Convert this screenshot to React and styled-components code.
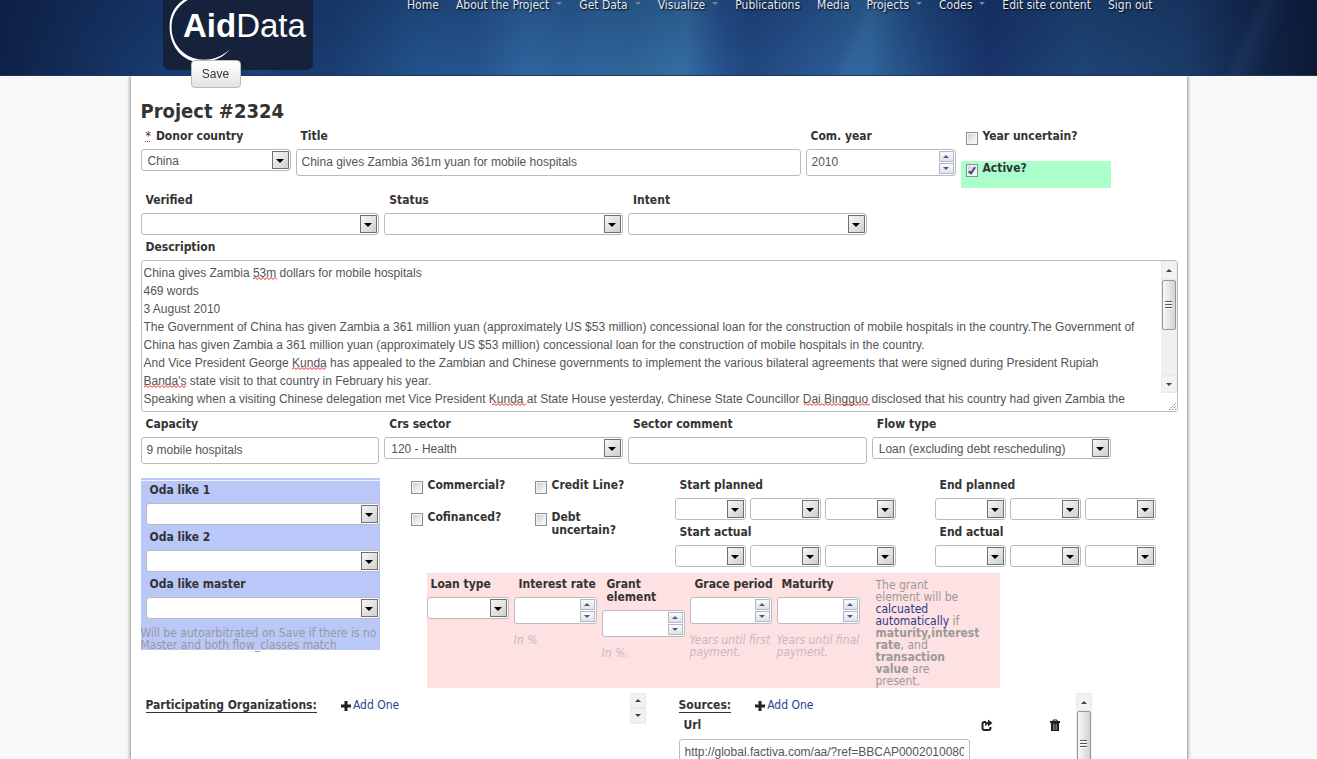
import React from "react";
import styled, { createGlobalStyle, css } from "styled-components";

const UI = `"DejaVu Sans Condensed", "DejaVu Sans", sans-serif`;
const FIELD = `"Liberation Sans", Arial, sans-serif`;

const GlobalStyle = createGlobalStyle`
  *, *::before, *::after { box-sizing: border-box; }
  body {
    margin: 0;
    background: #f8f8f8;
    color: #333;
    font-family: ${UI};
    font-size: 12px;
  }
`;

const Page = styled.div`
  display: flex;
  flex-direction: column;
  height: 100vh;
  overflow: hidden;
`;

const Header = styled.header`
  position: relative;
  z-index: 1;
  flex: none;
  height: 76px;
  border-bottom: 1px solid #20365f;
  background:
    linear-gradient(to bottom, rgba(10, 25, 60, 0.24), rgba(10, 25, 60, 0) 90%),
    linear-gradient(98deg, transparent 43%, rgba(80, 150, 200, 0.08) 45%, transparent 48%, rgba(80, 150, 200, 0.08) 52%, transparent 54%),
    linear-gradient(68deg, transparent 18%, rgba(70, 120, 180, 0.14) 19%, transparent 21%),
    linear-gradient(112deg, transparent 64%, rgba(90, 150, 200, 0.14) 65%, transparent 68%, transparent 93%, rgba(90, 140, 190, 0.1) 94%, transparent 96%),
    linear-gradient(to right, #0f2145 0%, #14305e 7%, #183a6e 12%, #1a3c70 25%, #22528a 32%, #26528c 36%, #2e649c 40%, #2b5f96 44%, #2d6498 48%, #32699e 52%, #264f8a 55%, #20477f 57%, #27528c 61%, #2d6399 66%, #1f4479 71%, #18336a 75%, #1e4473 82%, #1b3b68 90%, #122549 95%, #0c1a36 100%);
`;

const HeaderInner = styled.div`
  display: flex;
  align-items: flex-start;
  max-width: 1055px;
  height: 75px;
  margin: 0 auto;
  padding: 0 32px;
  overflow: hidden;
`;

const Logo = styled.a`
  display: block;
  flex: none;
  width: 150px;
  height: 70px;
  border-radius: 0 0 6px 6px;
  background: #16213c;
  svg { display: block; }
`;

const Nav = styled.nav`
  display: flex;
  gap: 17px;
  margin: -4px 0 0 94px;
`;

const NavLink = styled.a`
  display: flex;
  align-items: center;
  gap: 7px;
  color: #e3e9f1;
  line-height: 18px;
  text-decoration: none;
  text-shadow: 1px 1px 2px #000;
  white-space: nowrap;
  ${(p) => p.$menu && css`
    &::after {
      content: "";
      margin-top: -4px;
      border: 3px solid transparent;
      border-top-color: #7488a6;
      border-bottom: 0;
    }
  `}
`;

const SaveButton = styled.button`
  position: fixed;
  top: 60px;
  left: max(60px, calc(50% - 468px));
  z-index: 2;
  width: 50px;
  height: 28px;
  padding: 0;
  border: 1px solid #bbb;
  border-radius: 4px;
  background: linear-gradient(#fff, #e4e4e4);
  color: #333;
  font: 12px/26px ${FIELD};
`;

const Sheet = styled.main`
  flex: 1;
  width: 100%;
  max-width: 1056px;
  margin: 0 auto;
  padding: 22px 9px 0 10px;
  background: #fff;
  box-shadow: 0 0 4px #555;
`;

const Title = styled.h1`
  margin: 0;
  padding: 1px 0 6px;
  font-size: 20px;
  line-height: 24px;
`;

const Row = styled.div`
  display: grid;
  grid-template-columns: ${(p) => p.$cols};
  gap: 5px;
  align-items: start;
  max-width: 970px;
  margin-bottom: ${(p) => p.$after || 5}px;
`;

const FieldBox = styled.div`
  display: flex;
  flex-direction: column;
  min-width: 0;
`;

const Label = styled.label`
  margin: 0 0 6px;
  padding: 1px 0 0 ${(p) => p.$inset || 5}px;
  font-weight: bold;
  line-height: 13px;
  white-space: ${(p) => (p.$oneLine ? "nowrap" : "normal")};
`;

const Required = styled.abbr`
  margin-right: 5px;
  font-weight: normal;
  text-decoration: underline dotted #a33;
`;

const control = css`
  width: 100%;
  border: 1px solid #bbb;
  border-radius: 3px;
  background: #fff;
  color: #555;
  font: 12px ${FIELD};
  outline: 0;
`;

const SelectBox = styled.span`
  position: relative;
  display: block;
  flex: 1;
  select {
    ${control}
    display: block;
    appearance: none;
    height: 22px;
    padding: 1px 24px 0 6px;
  }
  &::before {
    content: "";
    position: absolute;
    top: 2px;
    right: 2px;
    width: 17px;
    height: 18px;
    border: 1px solid #707070;
    background: linear-gradient(135deg, #f6f6f6, #cfcfcf);
    pointer-events: none;
  }
  &::after {
    content: "";
    position: absolute;
    top: 10px;
    right: 7px;
    border: 4px solid transparent;
    border-top-color: #000;
    border-bottom: 0;
    pointer-events: none;
  }
`;

const TextInput = styled.input`
  ${control}
  height: 27px;
  padding: 0 5px 2px;
`;

const NumberBox = styled.span`
  position: relative;
  display: block;
  input { appearance: textfield; display: block; }
  input::-webkit-inner-spin-button { display: none; }
`;

const Spinner = styled.span`
  position: absolute;
  top: 2px;
  right: 2px;
  display: flex;
  flex-direction: column;
  gap: 1px;
`;

const SpinButton = styled.button`
  display: flex;
  align-items: center;
  justify-content: center;
  width: 15px;
  height: 11px;
  padding: 0;
  border: 1px solid #b4b9c6;
  background: linear-gradient(#fafafd, #dfe2ea);
  &::after {
    content: "";
    border: 3px solid transparent;
    ${(p) => (p.$up ? "border-bottom-color: #4c5a80; border-top: 0;" : "border-top-color: #4c5a80; border-bottom: 0;")}
  }
`;

const CheckRow = styled.div`
  display: flex;
  align-items: flex-start;
  gap: 5px;
  height: ${(p) => p.$height || 32}px;
  padding-left: 5px;
  background: ${(p) => (p.$on ? "#aaffcb" : "none")};
  label { padding-top: 1px; font-weight: bold; line-height: 13px; }
  input {
    appearance: none;
    display: grid;
    place-items: center;
    flex: none;
    width: 12px;
    height: 13px;
    margin: 3px 0 0;
    border: 1px solid #8b8d90;
    background: linear-gradient(135deg, #c9cdd0, #fff);
    box-shadow: inset 0 0 0 1px #f4f4f4;
  }
  input:checked::before {
    content: "";
    width: 4px;
    height: 8px;
    border: solid #3a4c86;
    border-width: 0 2px 2px 0;
    rotate: 35deg;
    translate: 0 -1px;
  }
`;

const Editor = styled.div`
  position: relative;
  display: flex;
  height: 152px;
  margin-bottom: 5px;
  border: 1px solid #bbb;
  border-radius: 3px;
  overflow: hidden;
  textarea {
    ${control}
    flex: 1;
    border: 0;
    padding: 3px 24px 0 2px;
    height: 150px;
    line-height: 18px;
    resize: none;
    overflow: hidden;
    white-space: pre-wrap;
  }
`;

const SpellMark = styled.svg`
  position: absolute;
  left: ${(p) => p.$x}px;
  top: ${(p) => 16 + p.$line * 18}px;
  pointer-events: none;
`;

const Bar = styled.div`
  display: flex;
  flex-direction: column;
  flex: none;
  width: 16px;
  background: #f0f0f0;
`;

const ArrowButton = styled.button`
  display: flex;
  align-items: center;
  justify-content: center;
  flex: none;
  width: 100%;
  height: ${(p) => p.$height || 15}px;
  margin-top: ${(p) => (p.$last ? "auto" : 0)};
  padding: 0;
  border: 1px solid #e9e9e9;
  background: #f2f2f2;
  &::after {
    content: "";
    border: 3px solid transparent;
    ${(p) => (p.$up ? "border-bottom-color: #444; border-top: 0;" : "border-top-color: #444; border-bottom: 0;")}
  }
`;

const Thumb = styled.div`
  display: flex;
  align-items: center;
  justify-content: center;
  flex: none;
  width: 14px;
  height: ${(p) => p.$height}px;
  margin: 0 1px;
  border: 1px solid #979797;
  border-radius: 2px;
  background: linear-gradient(to right, #f8f8f8, #d2d3d6);
  &::after {
    content: "";
    width: 7px;
    height: 8px;
    background: repeating-linear-gradient(#555 0 1px, #fff 1px 2px, transparent 2px 3px);
  }
`;

const Corner = styled.div`
  display: flex;
  align-items: flex-end;
  justify-content: flex-end;
  height: 18px;
  background: #fff;
`;

const Lower = styled.div`
  display: flex;
  align-items: flex-start;
  gap: 26px;
`;

const OdaPanel = styled.section`
  display: flex;
  flex-direction: column;
  gap: 5px;
  flex: none;
  width: 239px;
  height: 172px;
  border-top: 2px solid #b9c8f9;
  background: #b9c8f9;
  box-shadow: inset 0 1px 0 #eef2ff;
  padding: 3px 0 0 5px;
`;

const Hint = styled.p`
  margin: ${(p) => p.$top || 0}px 0 0;
  color: ${(p) => p.$color || "#999"};
  font-style: ${(p) => (p.$italic ? "italic" : "normal")};
  line-height: 12px;
`;

const OdaHint = styled(Hint)`
  margin: 3px 0 0 -5px;
  white-space: nowrap;
`;

const Details = styled.div`
  flex: 1;
  min-width: 0;
`;

const DetailTop = styled.div`
  display: flex;
  height: 95px;
`;

const Checks = styled.div`
  display: grid;
  grid-template-columns: 124px 110px;
  align-content: start;
  flex: none;
  width: 269px;
`;

const Dates = styled.div`
  display: grid;
  align-content: start;
  gap: 5px;
  flex: none;
  width: 221px;
  & + & { margin-left: 39px; }
`;

const Triple = styled.div`
  display: flex;
  gap: 4px;
`;

const LoanPanel = styled.section`
  display: grid;
  grid-template-columns: 82px 83px 83px 82px 83px 88px;
  gap: 5px;
  width: 573px;
  height: 115px;
  margin-left: 21px;
  padding-top: 3px;
  background: #fee1e2;
  border-top: 1px solid #f4dede;
`;

const GrantNote = styled(Hint)`
  width: 88px;
  margin-left: 11px;
  a { color: #2b3990; text-decoration: none; }
`;

const Lists = styled.div`
  display: flex;
  gap: 29px;
  margin-top: 5px;
`;

const ListPanel = styled.section`
  display: flex;
  width: ${(p) => p.$width}px;
  height: ${(p) => p.$height}px;
`;

const ListBody = styled.div`
  flex: 1;
  min-width: 0;
  padding: 5px 0 0 ${(p) => p.$inset}px;
`;

const ListHead = styled.div`
  display: flex;
  align-items: center;
  gap: 24px;
  line-height: 15px;
  h2 {
    margin: 0;
    border-bottom: 1px solid #333;
    font-size: 12px;
    line-height: 14px;
  }
`;

const AddLink = styled.a`
  display: flex;
  align-items: center;
  gap: 2px;
  color: #2b3f8f;
  text-decoration: none;
`;

const SourceHead = styled.div`
  display: grid;
  grid-template-columns: 302px 68px 1fr;
  height: 26px;
  padding-top: 6px;
  label { padding-left: 5px; font-weight: bold; line-height: 13px; }
`;

const IconButton = styled.button`
  width: 12px;
  height: 13px;
  padding: 0;
  border: 0;
  background: none;
  color: #222;
  svg { display: block; }
`;

const SourceInput = styled(TextInput)`
  width: 291px;
`;

const slug = (s) => s.toLowerCase().replace(/[^a-z0-9]+/g, "-");

function Select({ id, label, value = "" }) {
  return (
    <SelectBox>
      <select id={id} aria-label={label} defaultValue={value}>
        <option value={value}>{value}</option>
      </select>
    </SelectBox>
  );
}

function SelectField({ label, value, required, inset }) {
  const id = slug(label);
  return (
    <FieldBox>
      <Label htmlFor={id} $inset={inset}>
        {required && <Required title="required">*</Required>}
        {label}
      </Label>
      <Select id={id} value={value} />
    </FieldBox>
  );
}

function TextField({ label, value, inset }) {
  const id = slug(label);
  return (
    <FieldBox>
      <Label htmlFor={id} $inset={inset}>{label}</Label>
      <TextInput id={id} type="text" defaultValue={value} />
    </FieldBox>
  );
}

function NumberField({ label, value, hint, oneLine }) {
  const id = slug(label);
  return (
    <FieldBox>
      <Label htmlFor={id} $oneLine={oneLine}>{label}</Label>
      <NumberBox>
        <TextInput id={id} type="number" defaultValue={value} />
        <Spinner>
          <SpinButton type="button" $up aria-label={`Increase ${label}`} />
          <SpinButton type="button" aria-label={`Decrease ${label}`} />
        </Spinner>
      </NumberBox>
      {hint && <Hint $italic $top={10} $color="#c4bcbf">{hint}</Hint>}
    </FieldBox>
  );
}

function Check({ label, on, height }) {
  const id = slug(label);
  return (
    <CheckRow $on={on} $height={height}>
      <input id={id} type="checkbox" defaultChecked={on} />
      <label htmlFor={id}>{label}</label>
    </CheckRow>
  );
}

function DateField({ label }) {
  const id = slug(label);
  return (
    <FieldBox>
      <Label htmlFor={id}>{label}</Label>
      <Triple>
        <Select id={id} />
        <Select label={`${label} month`} />
        <Select label={`${label} day`} />
      </Triple>
    </FieldBox>
  );
}

function Squiggle({ x, line, width }) {
  let d = "M0 2";
  for (let i = 2; i <= width; i += 2) d += `L${i} ${i % 4 ? 0.5 : 2.5}`;
  return (
    <SpellMark $x={x} $line={line} width={width} height="3" aria-hidden="true">
      <path d={d} fill="none" stroke="#e22" />
    </SpellMark>
  );
}

function AddOne() {
  return (
    <AddLink href="#">
      <svg width="10" height="10" viewBox="0 0 10 10" aria-hidden="true">
        <path d="M5 0V10M0 5H10" stroke="#222" strokeWidth="3" />
      </svg>
      Add One
    </AddLink>
  );
}

const DESCRIPTION = `China gives Zambia 53m dollars for mobile hospitals
469 words
3 August 2010
The Government of China has given Zambia a 361 million yuan (approximately US $53 million) concessional loan for the construction of mobile hospitals in the country.The Government of China has given Zambia a 361 million yuan (approximately US $53 million) concessional loan for the construction of mobile hospitals in the country.
And Vice President George Kunda has appealed to the Zambian and Chinese governments to implement the various bilateral agreements that were signed during President Rupiah Banda's state visit to that country in February his year.
Speaking when a visiting Chinese delegation met Vice President Kunda at State House yesterday, Chinese State Councillor Dai Bingguo disclosed that his country had given Zambia the`;

const MARKS = [
  { x: 111, line: 0, width: 25 },
  { x: 150, line: 5, width: 35 },
  { x: 2, line: 6, width: 43 },
  { x: 350, line: 7, width: 35 },
  { x: 662, line: 7, width: 66 },
];

const NAV = [
  ["Home"], ["About the Project", true], ["Get Data", true], ["Visualize", true], ["Publications"],
  ["Media"], ["Projects", true], ["Codes", true], ["Edit site content"], ["Sign out"],
];

export default function App() {
  return (
    <Page>
      <GlobalStyle />
      <Header>
        <HeaderInner>
          <Logo href="#" aria-label="AidData">
            <svg width="150" height="70" viewBox="0 0 150 70">
              <path d="M26 -3C10 4 5 18 7 33C10 53 25 64 42 62C53 61 62 56 67 49C61 55 53 59 44 59.500C27 61 12 50 9 33C7 18 12 6 30 -3Z" fill="#fff" />
              <text x="20" y="37" fill="#fff" fontSize="33" fontFamily="'Liberation Sans', Arial, sans-serif">
                <tspan fontWeight="bold">Aid</tspan><tspan>Data</tspan>
              </text>
            </svg>
          </Logo>
          <Nav>
            {NAV.map(([text, menu]) => (
              <NavLink key={text} href="#" $menu={menu}>{text}</NavLink>
            ))}
          </Nav>
        </HeaderInner>
      </Header>
      <SaveButton type="button">Save</SaveButton>

      <Sheet>
        <Title>Project #2324</Title>
        <Row $cols="150fr 505fr 150fr 150fr">
          <SelectField label="Donor country" value="China" required />
          <TextField label="Title" value="China gives Zambia 361m yuan for mobile hospitals" />
          <NumberField label="Com. year" value="2010" />
          <div>
            <Check label="Year uncertain?" />
            <Check label="Active?" on height={27} />
          </div>
        </Row>
        <Row $cols="repeat(4, 1fr)">
          <SelectField label="Verified" />
          <SelectField label="Status" />
          <SelectField label="Intent" />
        </Row>
        <FieldBox>
          <Label htmlFor="description">Description</Label>
          <Editor>
            <textarea id="description" spellCheck={false} defaultValue={DESCRIPTION} />
            {MARKS.map((m) => <Squiggle key={`${m.line}-${m.x}`} {...m} />)}
            <Bar>
              <ArrowButton type="button" $up $height={19} aria-label="Scroll description up" />
              <Thumb $height={50} />
              <ArrowButton type="button" $last $height={18} aria-label="Scroll description down" />
              <Corner>
                <svg width="9" height="9" aria-hidden="true">
                  <path d="M1 8L8 1M4 8L8 4M7 8L8 7" stroke="#777" strokeDasharray="2 1" />
                </svg>
              </Corner>
            </Bar>
          </Editor>
        </FieldBox>
        <Row $cols="repeat(4, 1fr)" $after={14}>
          <TextField label="Capacity" value="9 mobile hospitals" />
          <SelectField label="Crs sector" value="120 - Health" />
          <TextField label="Sector comment" />
          <SelectField label="Flow type" value="Loan (excluding debt rescheduling)" />
        </Row>

        <Lower>
          <OdaPanel>
            <SelectField label="Oda like 1" inset={4} />
            <SelectField label="Oda like 2" inset={4} />
            <SelectField label="Oda like master" inset={4} />
            <OdaHint>Will be autoarbitrated on Save if there is no<br />Master and both flow_classes match</OdaHint>
          </OdaPanel>
          <Details>
            <DetailTop>
              <Checks>
                <Check label="Commercial?" />
                <Check label="Credit Line?" />
                <Check label="Cofinanced?" />
                <Check label="Debt uncertain?" />
              </Checks>
              <Dates>
                <DateField label="Start planned" />
                <DateField label="Start actual" />
              </Dates>
              <Dates>
                <DateField label="End planned" />
                <DateField label="End actual" />
              </Dates>
            </DetailTop>
            <LoanPanel>
              <SelectField label="Loan type" inset={4} />
              <NumberField label="Interest rate" hint="In %" oneLine />
              <NumberField label="Grant element" hint="In %." />
              <NumberField label="Grace period" hint="Years until first payment." oneLine />
              <NumberField label="Maturity" hint="Years until final payment." />
              <GrantNote $top={2}>
                The grant element will be <a href="#">calcuated automatically</a> if{" "}
                <b>maturity,interest rate</b>, and <b>transaction value</b> are present.
              </GrantNote>
            </LoanPanel>
          </Details>
        </Lower>

        <Lists>
          <ListPanel $width={505} $height={31}>
            <ListBody $inset={5}>
              <ListHead>
                <h2>Participating Organizations:</h2>
                <AddOne />
              </ListHead>
            </ListBody>
            <Bar>
              <ArrowButton type="button" $up aria-label="Scroll organizations up" />
              <ArrowButton type="button" aria-label="Scroll organizations down" />
            </Bar>
          </ListPanel>
          <ListPanel $width={417} $height={160}>
            <ListBody $inset={4}>
              <ListHead>
                <h2>Sources:</h2>
                <AddOne />
              </ListHead>
              <SourceHead>
                <label htmlFor="url">Url</label>
                <IconButton type="button" aria-label="Open source">
                  <svg width="12" height="13" viewBox="0 0 12 13">
                    <path d="M5 3H3.500Q1.500 3 1.500 5V9Q1.500 11 3.500 11H7.500Q9.500 11 9.500 9V8" fill="none" stroke="currentColor" strokeWidth="2" />
                    <path d="M7 0.500L11.500 4L7 7.500V5.300Q5 5.300 4.300 7.500Q3 3 7 2.700Z" fill="currentColor" />
                  </svg>
                </IconButton>
                <IconButton type="button" aria-label="Remove source">
                  <svg width="12" height="13" viewBox="0 0 12 13">
                    <path d="M4 2.500V1H8V2.500" fill="none" stroke="currentColor" />
                    <path d="M1 2H11V4H1ZM2 4H10V12H2Z" fill="currentColor" />
                    <path d="M4.500 5V11M6 5V11M7.500 5V11" stroke="#999" strokeWidth="0.700" />
                  </svg>
                </IconButton>
              </SourceHead>
              <SourceInput id="url" type="text" defaultValue="http://global.factiva.com/aa/?ref=BBCAP00020100803e683000mh" />
            </ListBody>
            <Bar>
              <ArrowButton type="button" $up $height={18} aria-label="Scroll sources up" />
              <Thumb $height={66} />
            </Bar>
          </ListPanel>
        </Lists>
      </Sheet>
    </Page>
  );
}
